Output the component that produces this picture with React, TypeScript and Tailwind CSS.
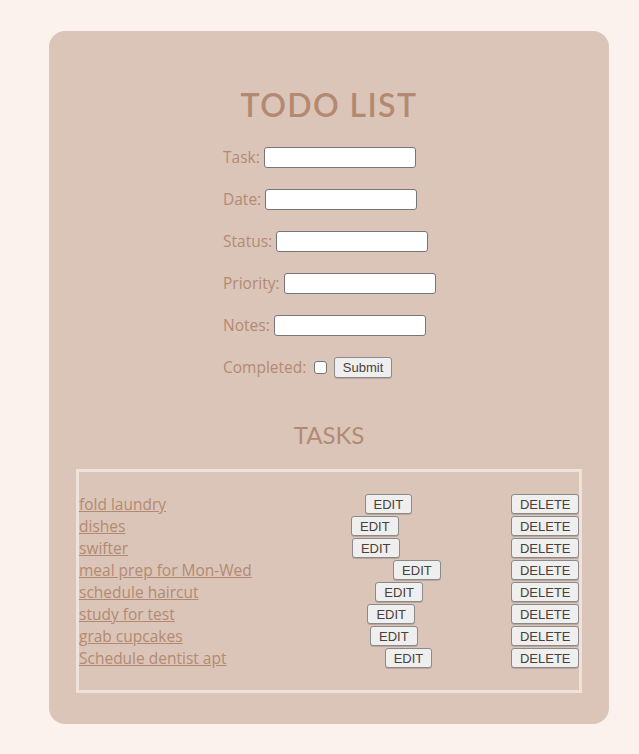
import React from "react";

const tasks = [
  "fold laundry",
  "dishes",
  "swifter",
  "meal prep for Mon-Wed",
  "schedule haircut",
  "study for test",
  "grab cupcakes",
  "Schedule dentist apt",
];

const fields = ["Task", "Date", "Status", "Priority", "Notes"];

const btn =
  "h-[20px] bg-[#efefef] border border-[#8a8a8a] rounded-[3px] text-[13px] leading-none text-[#4a403a] shadow-[0_1px_0_rgba(0,0,0,0.15)] [font-family:'Liberation_Sans',Arial,sans-serif]";

export default function App() {
  return (
    <div className="min-h-[754px] bg-[#fcf2ed] pt-[31px] pb-[30px] [font-family:'Open_Sans',sans-serif]">
      <div className="ml-[49px] w-[560px] h-[693px] rounded-[16px] bg-[#dbc5b9] flex flex-col items-center text-[#b38a71]">
        <h1 className="mt-[54px] text-[32px] leading-[40px] font-semibold tracking-[1.4px] [font-family:'Lato',sans-serif]">
          TODO LIST
        </h1>

        <form className="self-start ml-[174px] mt-[22px] flex flex-col gap-[21px] text-[15.5px]">
          {fields.map((f) => (
            <div key={f} className="flex items-center h-[21px]">
              <label>{f}:</label>
              <input
                type="text"
                className="ml-[4px] w-[152px] h-[21px] bg-white border border-[#767676] rounded-[3px]"
              />
            </div>
          ))}
          <div className="flex items-center h-[21px]">
            <label>Completed:</label>
            <input
              type="checkbox"
              className="ml-[8px] mr-[7px] w-[13px] h-[13px] appearance-none bg-white border border-[#767676] rounded-[3px]"
            />
            <button type="button" className={btn + " h-[21px] px-[7.5px]"}>
              Submit
            </button>
          </div>
        </form>

        <h2 className="mt-[41px] text-[24px] leading-[32px] [font-family:'Lato',sans-serif]">TASKS</h2>

        <ul className="mt-[18px] w-[506px] border-[3px] border-[#efe2db] pt-[21px] pb-[21px]">
          {tasks.map((t) => (
            <li key={t} className="flex justify-between items-center h-[22px]">
              <a href="#" className="underline text-[15.5px] leading-[22px]">
                {t}
              </a>
              <span />
              <button type="button" className={btn + " px-[8px]"}>
                EDIT
              </button>
              <button type="button" className={btn + " px-[7.5px]"}>
                DELETE
              </button>
            </li>
          ))}
        </ul>
      </div>
    </div>
  );
}
